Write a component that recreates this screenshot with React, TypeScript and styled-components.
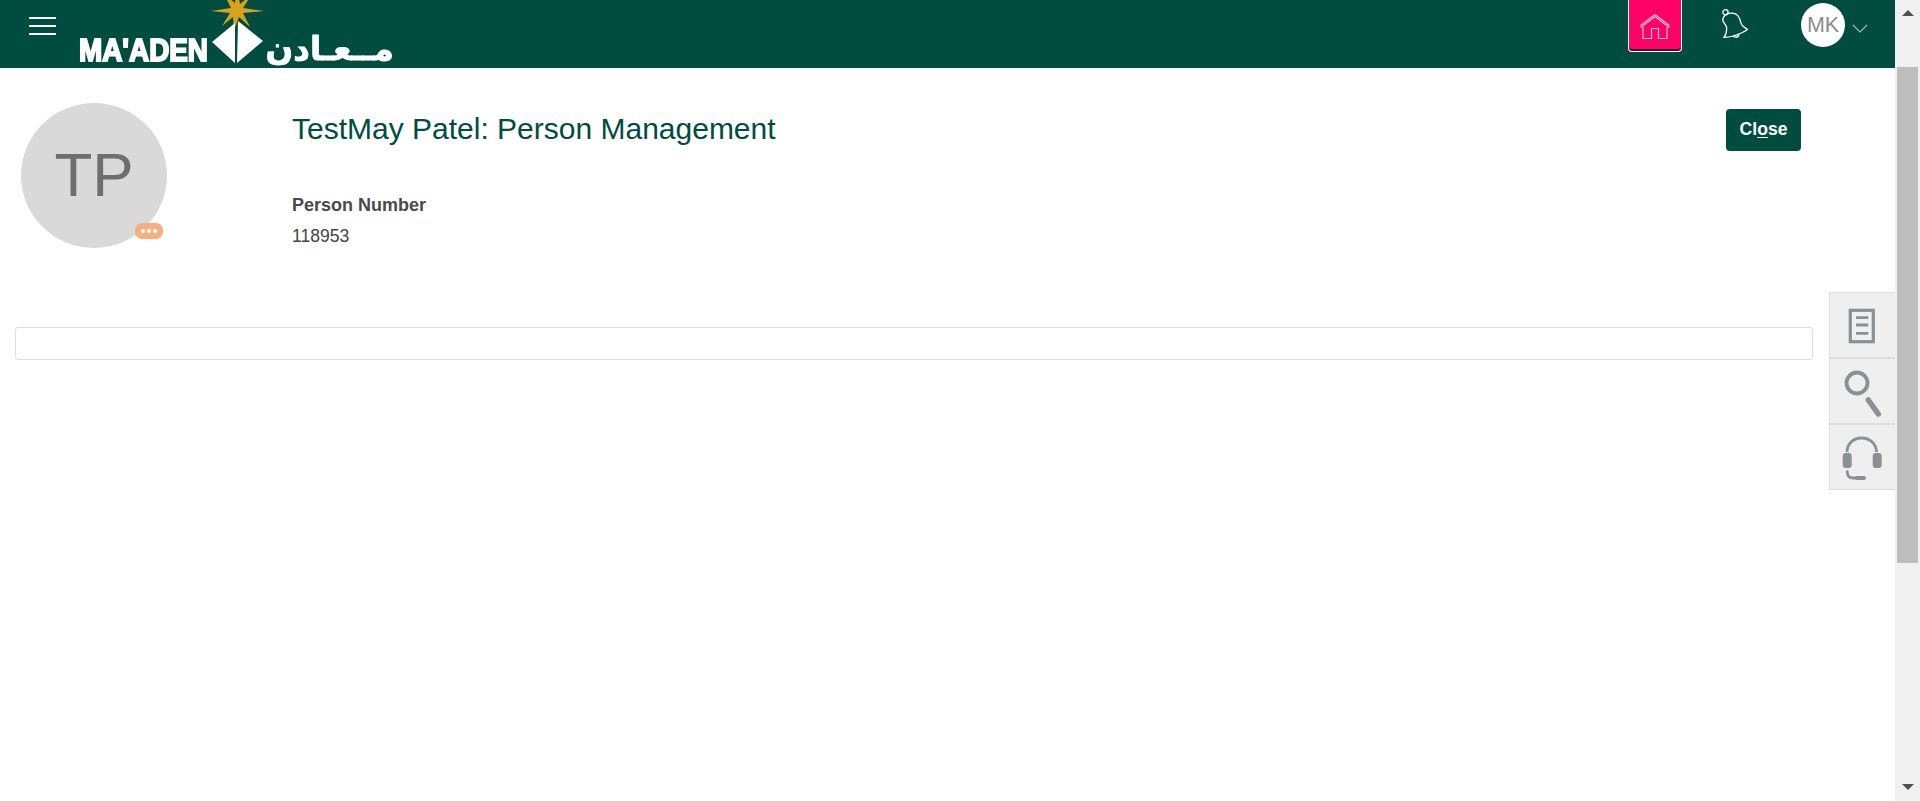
import * as React from 'react'
import styled, { createGlobalStyle } from 'styled-components'

const headerColor = '#004d40'
const font = '"Liberation Sans", Arial, sans-serif'

const GlobalStyle = createGlobalStyle`
  html, body {
    margin: 0;
    padding: 0;
    height: 100%;
    overflow: hidden;
    background: #ffffff;
    font-family: ${font};
  }
`

const Page = styled.div`
  display: flex;
  height: 100vh;
`

const Main = styled.div`
  flex: 1;
  min-width: 0;
  position: relative;
`

const Header = styled.header`
  height: 68px;
  background: ${headerColor};
  display: flex;
  align-items: flex-start;
  padding-left: 29px;
  overflow: hidden;
`

const Hamburger = styled.button`
  width: 27px;
  height: 18px;
  margin-top: 17px;
  padding: 0;
  border: 0;
  background: transparent;
  display: flex;
  flex-direction: column;
  justify-content: space-between;

  span {
    display: block;
    height: 2px;
    background: #ffffff;
  }
`

const LogoArt = styled.svg`
  width: 320px;
  height: 68px;
  margin-left: 23px;
  flex-shrink: 0;
  filter: blur(0.4px);
`

const HeaderActions = styled.div`
  margin-left: auto;
  display: flex;
  align-items: flex-start;
  padding-right: 27px;
`

const HomeButton = styled.button`
  width: 54px;
  height: 52px;
  padding: 0;
  background: #ff0066;
  border: 1px solid #ffffff;
  border-top: 0;
  border-radius: 0 0 4px 4px;
  box-shadow: inset 0 -2px 0 #3a0a22;
  display: flex;
  align-items: center;
  justify-content: center;
`

const BellButton = styled.button`
  width: 27px;
  height: 32px;
  margin: 8px 0 0 40px;
  padding: 0;
  border: 0;
  background: transparent;
`

const UserAvatar = styled.div`
  width: 44px;
  height: 44px;
  margin: 3px 0 0 52px;
  border-radius: 50%;
  background: #ffffff;
  color: #8b8b8b;
  font-size: 21.5px;
  display: flex;
  align-items: center;
  justify-content: center;
  overflow: hidden;
`

const Chevron = styled.svg`
  width: 16px;
  height: 9px;
  margin: 24px 0 0 7px;
`

const Profile = styled.section`
  display: flex;
  align-items: flex-start;
  padding: 35px 94px 0 21px;
`

const AvatarWrap = styled.div`
  position: relative;
  width: 146px;
  height: 145px;
  flex-shrink: 0;
`

const Avatar = styled.div`
  width: 100%;
  height: 100%;
  padding-bottom: 2px;
  box-sizing: border-box;
  border-radius: 50%;
  background: #d9d9d9;
  color: #6e6e6e;
  font-size: 62px;
  display: flex;
  align-items: center;
  justify-content: center;
`

const MoreBadge = styled.div`
  position: absolute;
  left: 114px;
  top: 120px;
  width: 28px;
  height: 16px;
  border-radius: 7px;
  background: #f5b07f;
  display: flex;
  align-items: center;
  justify-content: center;
  gap: 2.5px;

  i {
    width: 3.5px;
    height: 3.5px;
    border-radius: 50%;
    background: #ffffff;
  }
`

const Details = styled.div`
  flex: 1;
  margin-left: 125px;
`

const Title = styled.h1`
  margin: 8px 0 0;
  font-size: 30px;
  line-height: 36px;
  font-weight: 400;
  color: ${headerColor};
`

const FieldLabel = styled.div`
  margin-top: 47px;
  font-size: 18px;
  line-height: 22px;
  font-weight: 700;
  color: #4a4a4a;
`

const FieldValue = styled.div`
  margin-top: 10px;
  font-size: 17.6px;
  line-height: 20px;
  color: #444444;
`

const CloseButton = styled.button`
  width: 75px;
  height: 42px;
  margin-top: 6px;
  padding: 0 0 2px;
  border: 0;
  border-radius: 4px;
  background: ${headerColor};
  color: #ffffff;
  font-family: ${font};
  font-size: 17.6px;
  font-weight: 700;
  flex-shrink: 0;

  u {
    text-underline-offset: 2px;
    text-decoration-thickness: 1px;
  }
`

const EmptyBar = styled.div`
  height: 31px;
  margin: 79px 82px 0 15px;
  border: 1px solid #dcdfe0;
  border-radius: 3px;
`

const SideTabs = styled.aside`
  position: absolute;
  top: 292px;
  right: 0;
  width: 66px;
  background: #efefef;
  border: 1px solid #dddddd;
  border-right: 0;
  box-sizing: border-box;
  display: flex;
  flex-direction: column;
`

const SideTab = styled.div`
  height: 66px;
  box-sizing: border-box;
  border-bottom: 2px solid #dddddd;

  &:last-child {
    border-bottom: 0;
    height: 64px;
  }

  svg {
    display: block;
    width: 65px;
    height: 65px;
  }
`

const Scrollbar = styled.div`
  width: 25px;
  background: #f0f0f0;
  flex-shrink: 0;
  display: flex;
  flex-direction: column;
  align-items: center;
`

const Arrow = styled.div<{ $down?: boolean }>`
  width: 0;
  height: 0;
  border-left: 6px solid transparent;
  border-right: 6px solid transparent;
  ${(p) =>
    p.$down
      ? 'border-top: 6px solid #505050; margin-top: auto; margin-bottom: 11px;'
      : 'border-bottom: 6px solid #505050; margin-top: 10px;'}
`

const Thumb = styled.div`
  width: 21px;
  height: 496px;
  margin-top: 51px;
  background: #bdbdbd;
`

const Logo = () => (
  <LogoArt viewBox="79 0 320 68">
    <polygon
      points="237,-14 240,4 252,-6 243,8 264,11 243,13 250,27 239,17 234,30 233,17 222,26 230,13 211,11 231,8 224,-6 235,3"
      fill="#d8a21c"
    />
    <polygon points="235,23 212,42 235,63" fill="#ffffff" />
    <polygon points="238,21 263,41 237,63" fill="#ffffff" />
    <text
      x="79"
      y="61"
      textLength="129"
      lengthAdjust="spacingAndGlyphs"
      fontFamily="'Liberation Sans', sans-serif"
      fontWeight="700"
      fontSize="32"
      fill="#ffffff"
      stroke="#ffffff"
      strokeWidth="2"
    >
      MA'ADEN
    </text>
    <text
      x="394"
      y="60"
      textAnchor="start"
      direction="rtl"
      fontFamily="'DejaVu Sans', sans-serif"
      fontWeight="700"
      fontSize="32.5"
      fill="#ffffff"
      stroke="#ffffff"
      strokeWidth="0.8"
    >
      مــعـادن
    </text>
  </LogoArt>
)

const HomeIcon = () => (
  <svg width="32" height="28" viewBox="0 0 32 28" fill="none" stroke="#ffc2dc" strokeWidth="1.2">
    <path d="M1.5 13.5 16 2.5l14.5 11" />
    <path d="M1.5 15.5 16 4.7l14.5 10.8" />
    <path d="M4 15v11.5h8.5V16.5h7v10H28V15" />
  </svg>
)

const BellIcon = () => (
  <svg width="27" height="32" viewBox="0 0 27 32" fill="none" stroke="#ffffff" strokeWidth="1.3">
    <circle cx="3.5" cy="4.3" r="2.6" />
    <path d="M5.700 5.500C10.500 4.500 15 5.500 16.800 9c1.700 3 1.700 7 3.700 8.800 1.500 1.500 3.300 2.500 4.800 3.500-1 1.500-3.500 2.500-6 3.700-4 1.800-11 4.500-17.300 4.300 1.500-2 2.800-5 2.700-9C4.500 16 0.700 15 0.800 12 0.900 9 2.800 7 5.700 5.500Z" />
    <path d="M11.500 27.500c0.500 2.300 4.800 2.500 5.500-1" />
  </svg>
)

const DocIcon = () => (
  <svg viewBox="0 0 65 65" fill="none" stroke="#8c9093">
    <rect x="20.300" y="17.300" width="23" height="31.400" strokeWidth="3.200" />
    <path d="M26 24.700h12.300M26 32h12.300M26 40.300h12.300" strokeWidth="2.800" />
  </svg>
)

const SearchIcon = () => (
  <svg viewBox="0 0 65 65" fill="none" stroke="#8c9093">
    <circle cx="27" cy="24" r="10.500" strokeWidth="3.800" />
    <path d="M38.300 41l10 14" strokeWidth="5.500" strokeLinecap="round" />
  </svg>
)

const HeadsetIcon = () => (
  <svg viewBox="0 0 65 65" fill="none" stroke="#8c9093">
    <path d="M17 27c0-8 6-14 14.500-14S46.500 19 46.500 27" strokeWidth="2.800" />
    <rect x="12.700" y="28" width="9" height="15" rx="3" fill="#8c9093" stroke="none" />
    <rect x="42.700" y="28" width="9" height="15" rx="3" fill="#8c9093" stroke="none" />
    <path d="M17.300 46.700c0 4 2 6.300 6 6.300h10" strokeWidth="2.800" strokeLinecap="round" />
    <path d="M27 53h7" strokeWidth="4" strokeLinecap="round" />
  </svg>
)

const App = () => (
  <Page>
    <GlobalStyle />
    <Main>
      <Header>
        <Hamburger aria-label="Menu">
          <span />
          <span />
          <span />
        </Hamburger>
        <Logo />
        <HeaderActions>
          <HomeButton aria-label="Home">
            <HomeIcon />
          </HomeButton>
          <BellButton aria-label="Notifications">
            <BellIcon />
          </BellButton>
          <UserAvatar>MK</UserAvatar>
          <Chevron viewBox="0 0 16 9" fill="none" stroke="#9db8b2" strokeWidth="1.2">
            <path d="M1 1l7 7 7-7" />
          </Chevron>
        </HeaderActions>
      </Header>
      <Profile>
        <AvatarWrap>
          <Avatar>TP</Avatar>
          <MoreBadge>
            <i />
            <i />
            <i />
          </MoreBadge>
        </AvatarWrap>
        <Details>
          <Title>TestMay Patel: Person Management</Title>
          <FieldLabel>Person Number</FieldLabel>
          <FieldValue>118953</FieldValue>
        </Details>
        <CloseButton>
          Cl<u>o</u>se
        </CloseButton>
      </Profile>
      <EmptyBar />
      <SideTabs>
        <SideTab>
          <DocIcon />
        </SideTab>
        <SideTab>
          <SearchIcon />
        </SideTab>
        <SideTab>
          <HeadsetIcon />
        </SideTab>
      </SideTabs>
    </Main>
    <Scrollbar>
      <Arrow />
      <Thumb />
      <Arrow $down />
    </Scrollbar>
  </Page>
)

export default App
